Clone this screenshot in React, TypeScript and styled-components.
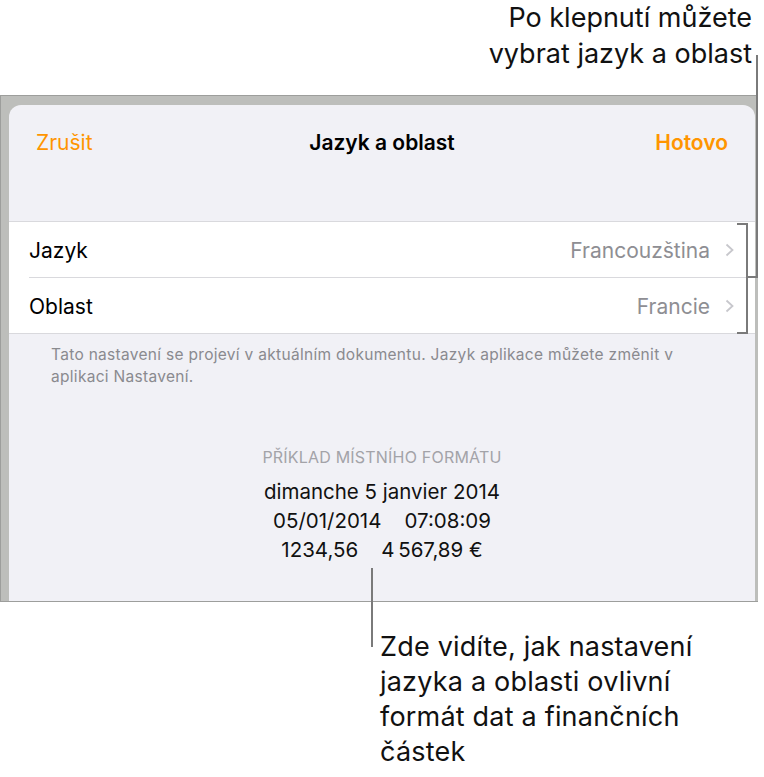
import React from 'react';
import styled, { createGlobalStyle } from 'styled-components';

const ORANGE = '#ff9500';
const SHEET_BG = '#f1f1f6';
const FRAME_GRAY = '#bdbebb';
const HAIRLINE = '#d9d9dd';
const SECONDARY = '#8e8e93';
const LEADER = '#7a7a7a';

const GlobalStyle = createGlobalStyle`
    html, body {
        margin: 0;
        padding: 0;
        background: #ffffff;
    }
    body {
        font-family: Inter, Roboto, "Liberation Sans", sans-serif;
        -webkit-font-smoothing: antialiased;
    }
`;

const Page = styled.div`
    position: relative;
    width: 764px;
    height: 777px;
    overflow: hidden;
    background: #ffffff;
`;

const Callout = styled.div<{ $align: 'left' | 'right' }>`
    font-size: 27px;
    line-height: 36px;
    color: #111111;
    text-align: ${(p) => p.$align};
`;

const TopCallout = styled(Callout)`
    height: 95px;
    box-sizing: border-box;
    padding: 0 12px 0 0;
`;

const BottomCallout = styled(Callout)`
    padding: 27px 0 0 380px;
    line-height: 35px;
    letter-spacing: 0.2px;
`;

const DeviceFrame = styled.div`
    height: 507px;
    box-sizing: border-box;
    width: 758px;
    background: ${FRAME_GRAY};
    border: 1.5px solid #9d9e9c;
    border-right: none;
    padding: 9px 3px 0 8px;
    display: flex;
`;

const Sheet = styled.div`
    flex: 1;
    background: ${SHEET_BG};
    border-radius: 12px 12px 0 0;
    display: flex;
    flex-direction: column;
`;

const NavBar = styled.div`
    height: 116px;
    box-sizing: border-box;
    padding: 26px 27px 0;
    display: grid;
    grid-template-columns: 1fr auto 1fr;
    align-items: start;
    font-size: 21px;
    line-height: 24px;
`;

const NavButton = styled.span<{ $bold?: boolean; $end?: boolean }>`
    color: ${ORANGE};
    font-weight: ${(p) => (p.$bold ? 600 : 400)};
    justify-self: ${(p) => (p.$end ? 'end' : 'start')};
`;

const NavTitle = styled.span`
    color: #000000;
    font-weight: 600;
`;

const Table = styled.div`
    background: #ffffff;
    border-top: 1px solid ${HAIRLINE};
    border-bottom: 1px solid ${HAIRLINE};
    padding-left: 20px;
`;

const Row = styled.div<{ $divider?: boolean }>`
    height: 55px;
    display: flex;
    align-items: center;
    padding-right: 21px;
    font-size: 21px;
    border-bottom: ${(p) => (p.$divider ? `1px solid ${HAIRLINE}` : 'none')};
`;

const RowLabel = styled.span`
    flex: 1;
    color: #000000;
    padding-top: 1px;
`;

const RowValue = styled.span`
    color: ${SECONDARY};
    margin-right: 15px;
    padding-top: 1px;
`;

const FooterNote = styled.p`
    margin: 0;
    padding: 10px 40px 0 42px;
    font-size: 15.5px;
    line-height: 22px;
    letter-spacing: 0.3px;
    color: #8a8a8f;
`;

const Sample = styled.div`
    padding-top: 58px;
    display: flex;
    flex-direction: column;
    align-items: center;
    color: #111111;
`;

const SampleHeader = styled.div`
    font-size: 16px;
    line-height: 22px;
    letter-spacing: 0.2px;
    color: #a3a3a8;
    margin-bottom: 9px;
    text-transform: uppercase;
`;

const SampleLine = styled.div`
    display: flex;
    gap: 23px;
    font-size: 20.5px;
    line-height: 29px;
`;

const Overlay = styled.svg`
    position: absolute;
    left: 0;
    top: 0;
    pointer-events: none;
`;

function Chevron() {
    return (
        <svg width="9" height="14" viewBox="0 0 9 14">
            <polyline points="1.5,1.5 7.5,7 1.5,12.5" fill="none" stroke="#c7c7cc" strokeWidth="1.8" />
        </svg>
    );
}

interface ISettingRow {
    label: string;
    value: string;
}

const rows: ISettingRow[] = [
    { label: 'Jazyk', value: 'Francouzština' },
    { label: 'Oblast', value: 'Francie' },
];

export default function App() {
    return (
        <Page>
            <GlobalStyle />
            <TopCallout $align="right">
                Po klepnutí můžete
                <br />
                vybrat jazyk a oblast
            </TopCallout>
            <DeviceFrame>
                <Sheet>
                    <NavBar>
                        <NavButton>Zrušit</NavButton>
                        <NavTitle>Jazyk a oblast</NavTitle>
                        <NavButton $bold $end>
                            Hotovo
                        </NavButton>
                    </NavBar>
                    <Table>
                        {rows.map((row, i) => (
                            <Row key={row.label} $divider={i < rows.length - 1}>
                                <RowLabel>{row.label}</RowLabel>
                                <RowValue>{row.value}</RowValue>
                                <Chevron />
                            </Row>
                        ))}
                    </Table>
                    <FooterNote>
                        Tato nastavení se projeví v aktuálním dokumentu. Jazyk aplikace můžete změnit v aplikaci
                        Nastavení.
                    </FooterNote>
                    <Sample>
                        <SampleHeader>Příklad místního formátu</SampleHeader>
                        <SampleLine>dimanche 5 janvier 2014</SampleLine>
                        <SampleLine>
                            <span>05/01/2014</span>
                            <span>07:08:09</span>
                        </SampleLine>
                        <SampleLine>
                            <span>1234,56</span>
                            <span>4{'\u202F'}567,89 €</span>
                        </SampleLine>
                    </Sample>
                </Sheet>
            </DeviceFrame>
            <BottomCallout $align="left">
                Zde vidíte, jak nastavení
                <br />
                jazyka a oblasti ovlivní
                <br />
                formát dat a finančních
                <br />
                částek
            </BottomCallout>
            <Overlay width="764" height="777">
                <g fill="none" stroke={LEADER} strokeWidth="2">
                    <line x1="757" y1="55" x2="757" y2="278" />
                    <polyline points="737,224 747,224 747,333 737,333" />
                    <line x1="747" y1="277" x2="758" y2="277" />
                    <line x1="372" y1="568" x2="372" y2="647" />
                </g>
            </Overlay>
        </Page>
    );
}
